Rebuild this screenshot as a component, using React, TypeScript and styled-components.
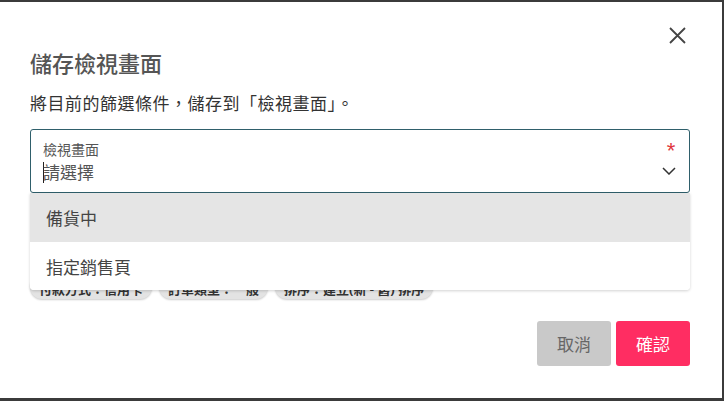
import styled, { createGlobalStyle } from "styled-components";

const GlobalStyle = createGlobalStyle`
  html, body {
    margin: 0;
    padding: 0;
    background: #ffffff;
  }
  body {
    font-family: "Noto Sans", "Noto Sans CJK TC", sans-serif;
  }
`;

interface ChipProps {
  label: string;
}

const options = ["備貨中", "指定銷售頁"];
const filters = ["付款方式：信用卡", "訂單類型：一般", "排序：建立(新 - 舊) 排序"];

const FilterChip = ({ label }: ChipProps): JSX.Element => <Chip>{label}</Chip>;

export default function App(): JSX.Element {
  return (
    <>
      <GlobalStyle />
      <Modal>
        <CloseButton aria-label="close">
          <svg width="17" height="17" viewBox="0 0 17 17">
            <path d="M1 1 L16 16 M16 1 L1 16" stroke="#444" strokeWidth="1.8" fill="none" />
          </svg>
        </CloseButton>
        <Title>儲存檢視畫面</Title>
        <Description>將目前的篩選條件，儲存到「檢視畫面」。</Description>

        <SelectWrapper>
          <SelectBox>
            <SelectBody>
              <FieldLabel>檢視畫面</FieldLabel>
              <Placeholder>
                <Caret />
                請選擇
              </Placeholder>
            </SelectBody>
            <SelectSide>
              <Required>*</Required>
              <svg width="14" height="8" viewBox="0 0 14 8">
                <path d="M1 1 L7 7 L13 1" stroke="#333" strokeWidth="1.5" fill="none" />
              </svg>
            </SelectSide>
          </SelectBox>
          <Menu>
            {options.map((o, i) => (
              <MenuItem key={o} $active={i === 0}>
                {o}
              </MenuItem>
            ))}
          </Menu>
        </SelectWrapper>

        <ChipRow>
          {filters.map((f) => (
            <FilterChip key={f} label={f} />
          ))}
        </ChipRow>

        <Footer>
          <Button $variant="cancel">取消</Button>
          <Button $variant="confirm">確認</Button>
        </Footer>
      </Modal>
    </>
  );
}

const Modal = styled.div`
  position: relative;
  box-sizing: border-box;
  width: 724px;
  height: 401px;
  background: #fff;
  border-top: 2px solid #3b3b3b;
  border-right: 2px solid #3b3b3b;
  border-bottom: 3px solid #3b3b3b;
  padding: 46px 32px 0 30px;
  display: flex;
  flex-direction: column;
`;

const CloseButton = styled.button`
  position: absolute;
  top: 24px;
  right: 35px;
  width: 19px;
  height: 19px;
  padding: 1px;
  border: none;
  background: transparent;
  display: flex;
  align-items: center;
  justify-content: center;
`;

const Title = styled.h2`
  margin: 0;
  font-size: 22px;
  line-height: 30px;
  font-weight: 500;
  color: #555;
`;

const Description = styled.p`
  margin: 14px 0 0;
  font-size: 17px;
  line-height: 24px;
  letter-spacing: 0.5px;
  color: #333;
`;

const SelectWrapper = styled.div`
  position: relative;
  margin-top: 13px;
`;

const SelectBox = styled.div`
  box-sizing: border-box;
  height: 64px;
  border: 1px solid #2f5f6b;
  border-radius: 3px;
  display: flex;
  align-items: stretch;
  padding: 10px 12px 0 12px;
`;

const SelectBody = styled.div`
  flex: 1;
  display: flex;
  flex-direction: column;
`;

const FieldLabel = styled.span`
  font-size: 14px;
  line-height: 19px;
  color: #555;
`;

const Placeholder = styled.span`
  margin-top: 2px;
  font-size: 17px;
  line-height: 23px;
  color: #555;
  display: flex;
  align-items: center;
`;

const Caret = styled.span`
  display: inline-block;
  width: 1px;
  height: 21px;
  background: #222;
  margin-right: -1px;
`;

const SelectSide = styled.div`
  display: flex;
  flex-direction: column;
  align-items: center;
  width: 16px;
`;

const Required = styled.span`
  font-family: "Liberation Sans", sans-serif;
  font-size: 22px;
  line-height: 20px;
  height: 20px;
  color: #e0383e;
  margin-top: 1px;
  margin-bottom: 6px;
  margin-left: 4px;
`;

const Menu = styled.div`
  position: absolute;
  top: 100%;
  left: 0;
  right: 0;
  background: #fff;
  border-radius: 0 0 4px 4px;
  box-shadow: 0 1px 3px rgba(0, 0, 0, 0.18);
  overflow: hidden;
  z-index: 2;
`;

const MenuItem = styled.div<{ $active?: boolean }>`
  height: ${(p) => (p.$active ? "49px" : "48px")};
  padding-left: 16px;
  display: flex;
  align-items: center;
  font-size: 17px;
  color: #444;
  background: ${(p) => (p.$active ? "#e5e5e5" : "#fff")};
`;

const ChipRow = styled.div`
  display: flex;
  gap: 7px;
  margin-top: 82px;
`;

const Chip = styled.span`
  height: 24px;
  padding: 0 9px;
  border-radius: 12px;
  background: #e3e3e3;
  box-shadow: 0 1px 2px rgba(0, 0, 0, 0.2);
  font-size: 13px;
  line-height: 28px;
  font-weight: 700;
  color: #333;
  white-space: nowrap;
  overflow: hidden;
`;

const Footer = styled.div`
  display: flex;
  justify-content: flex-end;
  gap: 5px;
  margin-top: 22px;
`;

const Button = styled.button<{ $variant: "cancel" | "confirm" }>`
  width: 74px;
  height: 45px;
  border: none;
  border-radius: 3px;
  font-family: "Noto Sans", "Noto Sans CJK TC", sans-serif;
  font-size: 17px;
  background: ${(p) => (p.$variant === "confirm" ? "#ff2d62" : "#c9c9c9")};
  color: ${(p) => (p.$variant === "confirm" ? "#fff" : "#666")};
`;
